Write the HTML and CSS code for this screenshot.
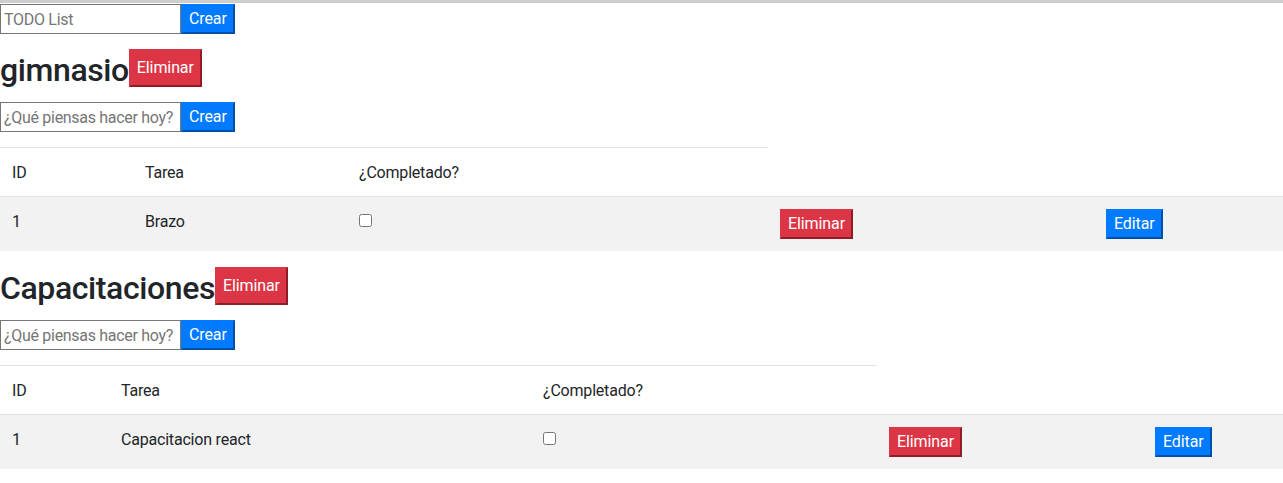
FILE: index.html
```html
<!DOCTYPE html>
<html lang="es">
<head>
<meta charset="utf-8">
<title>TODO List</title>
<link rel="stylesheet" href="styles.css">
</head>
<body>
  <div class="form-row top-form">
    <input class="field" type="text" placeholder="TODO List">
    <button class="btn btn-primary">Crear</button>
  </div>

  <section class="list">
    <div class="list-head">
      <h2 class="list-title">gimnasio</h2>
      <button class="btn btn-danger btn-tall">Eliminar</button>
    </div>
    <div class="form-row">
      <input class="field" type="text" placeholder="¿Qué piensas hacer hoy?">
      <button class="btn btn-primary">Crear</button>
    </div>
    <table class="table t1">
      <colgroup><col><col><col><col><col></colgroup>
      <thead>
        <tr><th>ID</th><th>Tarea</th><th>¿Completado?</th></tr>
      </thead>
      <tbody>
        <tr>
          <td>1</td>
          <td>Brazo</td>
          <td><input class="check" type="checkbox"></td>
          <td><button class="btn btn-danger">Eliminar</button></td>
          <td><button class="btn btn-primary">Editar</button></td>
        </tr>
      </tbody>
    </table>
  </section>

  <section class="list">
    <div class="list-head">
      <h2 class="list-title">Capacitaciones</h2>
      <button class="btn btn-danger btn-tall">Eliminar</button>
    </div>
    <div class="form-row">
      <input class="field" type="text" placeholder="¿Qué piensas hacer hoy?">
      <button class="btn btn-primary">Crear</button>
    </div>
    <table class="table t2">
      <colgroup><col><col><col><col><col></colgroup>
      <thead>
        <tr><th>ID</th><th>Tarea</th><th>¿Completado?</th></tr>
      </thead>
      <tbody>
        <tr>
          <td>1</td>
          <td>Capacitacion react</td>
          <td><input class="check" type="checkbox"></td>
          <td><button class="btn btn-danger">Eliminar</button></td>
          <td><button class="btn btn-primary">Editar</button></td>
        </tr>
      </tbody>
    </table>
  </section>
</body>
</html>
```

FILE: styles.css
```css
* { box-sizing: border-box; }

html, body {
  margin: 0;
  background: #fff;
}

body {
  border-top: 3px solid #cdcdcd;
  padding-top: 1px;
  font-family: "Segoe UI", Roboto, "Noto Sans", sans-serif;
  font-size: 16px;
  line-height: 24px;
  letter-spacing: -0.2px;
  color: #212529;
}

.form-row {
  display: flex;
  align-items: stretch;
  height: 30px;
}

.list .form-row {
  margin-bottom: 15px;
}

.field {
  width: 181px;
  height: 30px;
  margin: 0;
  padding: 2px 3px 1px 3px;
  border: 1px solid #767676;
  border-radius: 0;
  font-family: inherit;
  font-size: 16px;
  letter-spacing: -0.3px;
  color: #212529;
  background: #fff;
}

.field::placeholder {
  color: #757575;
}

.btn {
  margin: 0;
  padding: 1px 6px;
  border-width: 2px;
  border-style: solid;
  border-radius: 0;
  font-family: inherit;
  font-size: 16px;
  line-height: 24px;
  letter-spacing: -0.1px;
  color: #fff;
  cursor: pointer;
}

.btn-primary {
  background: #007bff;
  border-color: #007bff #0050a8 #0050a8 #007bff;
}

.btn-danger {
  background: #dc3545;
  border-color: #dc3545 #8f1c27 #8f1c27 #dc3545;
}

.btn-tall {
  padding-top: 5px;
  padding-bottom: 5px;
}

.list-head {
  display: flex;
  align-items: center;
  padding: 15px 0;
}

.list-title {
  margin: 0 0 -2px 0;
  padding-top: 2px;
  font-size: 32px;
  font-weight: 500;
  line-height: 38px;
  letter-spacing: -0.4px;
}

.table {
  width: 100%;
  border-collapse: collapse;
  table-layout: fixed;
  margin-bottom: 1px;
}

.table th,
.table td {
  padding: 13px 12px 11px;
  border-top: 1px solid #dee2e6;
  text-align: left;
  vertical-align: top;
  font-weight: 400;
}

.table tbody tr {
  background: #f2f2f2;
}

.table td .btn {
  display: block;
  margin-top: -1px;
  margin-bottom: 1px;
}

.check {
  display: block;
  width: 13px;
  height: 13px;
  margin: 4px 0 0 0;
}

.t1 col:nth-child(1) { width: 133px; }
.t1 col:nth-child(2) { width: 214px; }
.t1 col:nth-child(3) { width: 421px; }
.t1 col:nth-child(4) { width: 326px; }

.t2 col:nth-child(1) { width: 109px; }
.t2 col:nth-child(2) { width: 422px; }
.t2 col:nth-child(3) { width: 346px; }
.t2 col:nth-child(4) { width: 266px; }
```
